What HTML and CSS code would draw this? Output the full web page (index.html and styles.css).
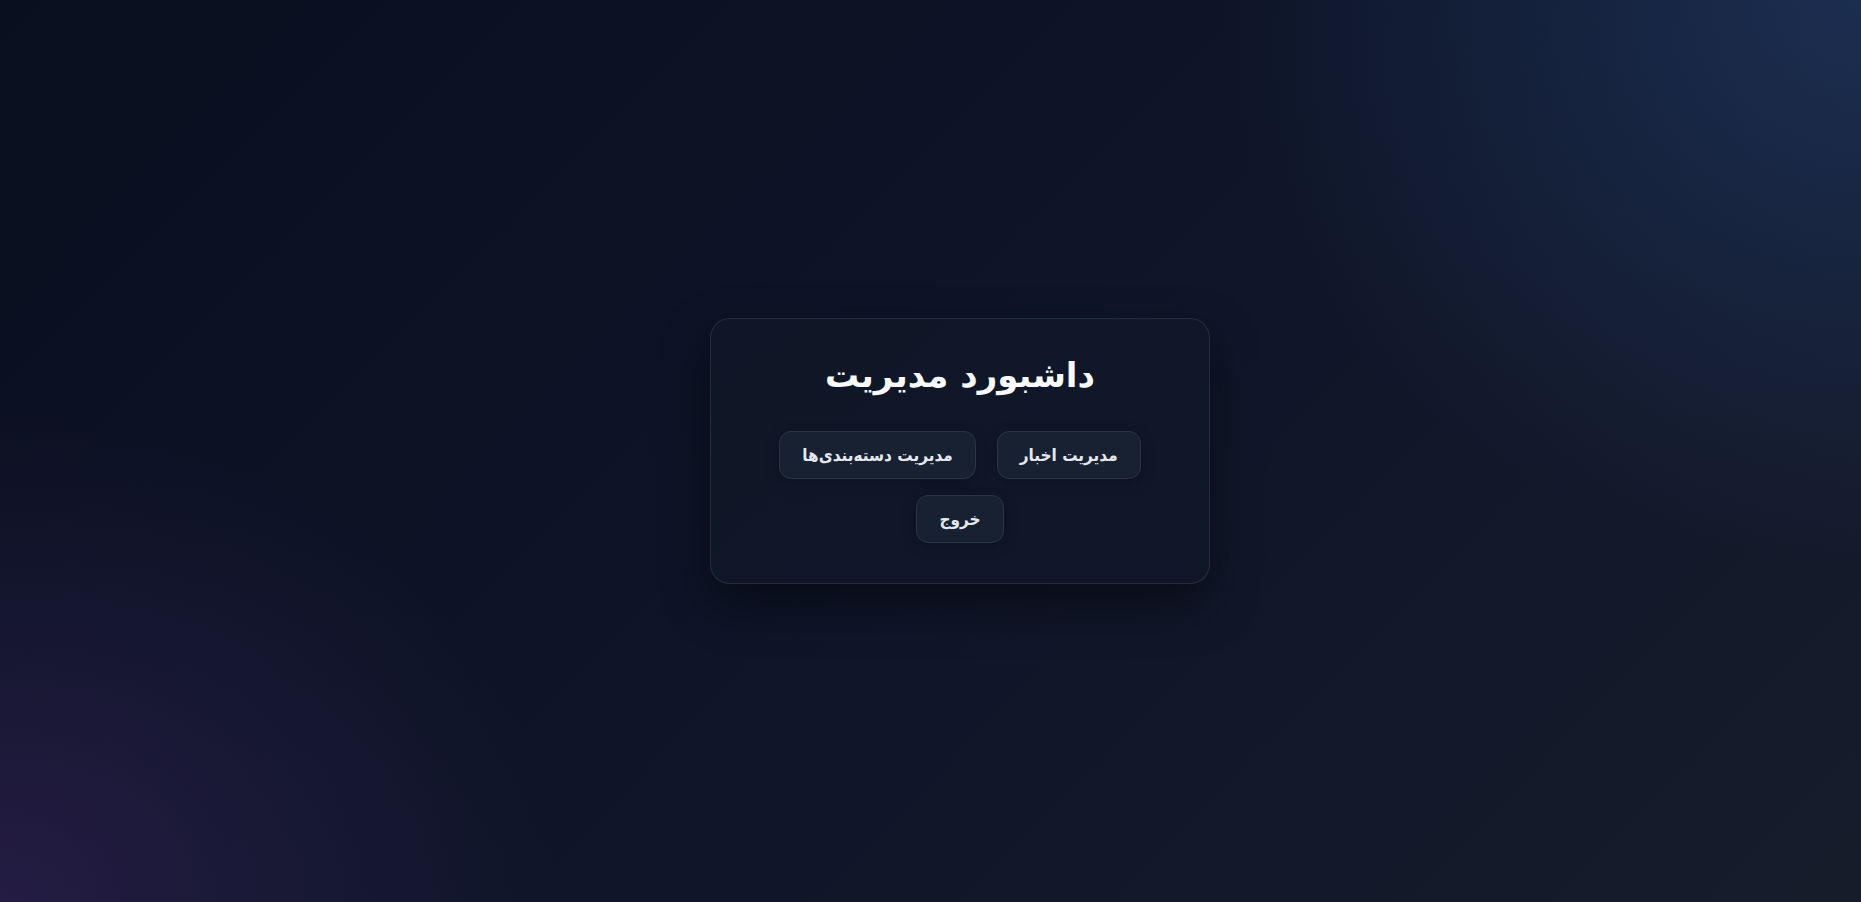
FILE: index.html
```html
<!DOCTYPE html>
<html lang="fa" dir="rtl">
<head>
<meta charset="utf-8">
<title>داشبورد مدیریت</title>
<link rel="stylesheet" href="styles.css">
</head>
<body>
<main class="page">
  <section class="card">
    <h1 class="title">داشبورد مدیریت</h1>
    <nav class="actions">
      <a class="btn" href="#">مدیریت اخبار</a>
      <a class="btn" href="#">مدیریت دسته‌بندی‌ها</a>
      <a class="btn" href="#">خروج</a>
    </nav>
  </section>
</main>
</body>
</html>
```
FILE: styles.css
```css
* { box-sizing: border-box; }
html, body { margin: 0; padding: 0; height: 100%; }
body {
  font-family: "DejaVu Sans", "Noto Sans", sans-serif;
  color: #f8fafc;
  background:
    radial-gradient(ellipse 640px 560px at 100% 0%, rgba(38, 68, 120, 0.5), rgba(38, 68, 120, 0) 100%),
    radial-gradient(ellipse 560px 480px at 0% 100%, rgba(56, 36, 92, 0.55), rgba(56, 36, 92, 0) 100%),
    linear-gradient(135deg, #0a0f1f 0%, #0e1528 50%, #171c2b 100%);
}
.page {
  min-height: 100%;
  display: flex;
  align-items: center;
  justify-content: center;
  padding-left: 59px;
}
.card {
  width: 500px;
  padding: 34px 40px 40px;
  border-radius: 20px;
  background: rgba(16, 23, 40, 0.85);
  border: 1px solid rgba(148, 163, 184, 0.16);
  box-shadow: 0 20px 50px rgba(0, 0, 0, 0.45);
  text-align: center;
}
.title {
  margin: 0 0 34px;
  font-size: 34px;
  font-weight: 700;
  line-height: 1.3;
  color: #f8fafc;
}
.actions {
  display: flex;
  flex-wrap: wrap;
  justify-content: center;
  gap: 16px 21px;
}
.btn {
  display: inline-block;
  padding: 12px 22px;
  font-family: "DejaVu Sans Condensed", "DejaVu Sans", sans-serif;
  font-size: 17px;
  font-weight: 700;
  line-height: 22px;
  color: #e5e7eb;
  text-decoration: none;
  background: #172131;
  border: 1px solid #2a3445;
  border-radius: 12px;
  box-shadow: 0 4px 14px rgba(0, 0, 0, 0.25);
}
```
